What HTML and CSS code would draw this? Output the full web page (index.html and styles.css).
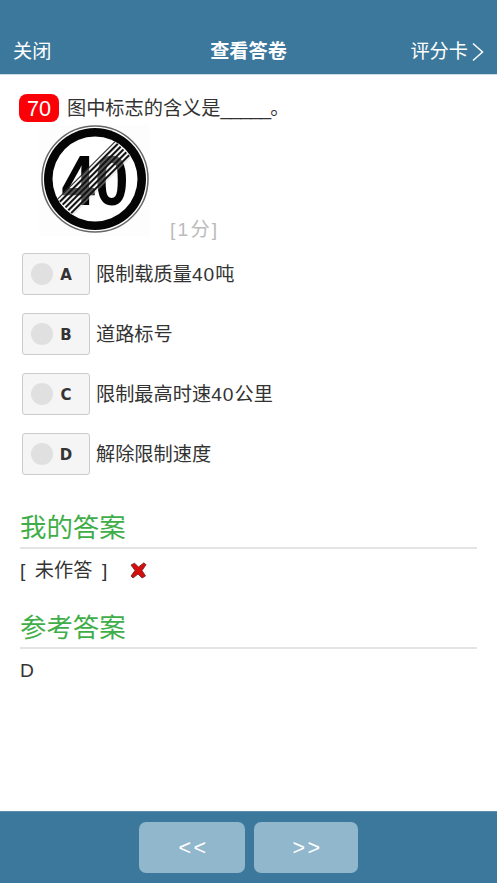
FILE: index.html
```
<!DOCTYPE html>
<html lang="zh-CN">
<head>
<meta charset="utf-8">
<title>查看答卷</title>
<link rel="stylesheet" href="styles.css">
</head>
<body>
<div class="app">
  <header class="topbar">
    <span class="top-left">关闭</span>
    <span class="top-title">查看答卷</span>
    <span class="top-right">评分卡<svg class="chev" width="12" height="20" viewBox="0 0 12 20"><path d="M1 1.5 L10.5 10 L1 18.5" fill="none" stroke="#fff" stroke-width="1.5"/></svg></span>
  </header>
  <main class="content">
    <div class="question"><span class="badge">70</span><span class="qtext">图中标志的含义是<span class="blank">_____</span>。</span></div>
    <div class="figure">
      <svg class="sign" width="111" height="111" viewBox="0 0 111 111">
        <defs>
          <pattern id="hatch" width="4" height="4" patternUnits="userSpaceOnUse" patternTransform="rotate(-45)">
            <rect width="4" height="2.1" fill="#111"/>
          </pattern>
          <clipPath id="inner"><circle cx="56" cy="54" r="42.5"/></clipPath>
        </defs>
        <rect width="111" height="111" fill="#fdfdfd"/>
        <circle cx="56" cy="54" r="53" fill="#fff" stroke="#666" stroke-width="1.5"/>
        <circle cx="56" cy="54" r="51" fill="#050505"/>
        <circle cx="56" cy="54" r="42.5" fill="#fff"/>
        <text class="sign-num" x="56" y="80" text-anchor="middle" textLength="67" lengthAdjust="spacingAndGlyphs">40</text>
        <g clip-path="url(#inner)">
          <polygon points="18,74 76,16 92,32 34,90" fill="#fff" opacity="0.35"/>
          <polygon points="18,74 76,16 92,32 34,90" fill="url(#hatch)"/>
        </g>
      </svg>
      <span class="score">[1分]</span>
    </div>
    <ul class="options">
      <li class="option"><span class="opt-btn"><i class="dot"></i><b class="letter">A</b></span><span class="opt-text">限制载质量<span class="num">40</span>吨</span></li>
      <li class="option"><span class="opt-btn"><i class="dot"></i><b class="letter">B</b></span><span class="opt-text">道路标号</span></li>
      <li class="option"><span class="opt-btn"><i class="dot"></i><b class="letter">C</b></span><span class="opt-text">限制最高时速<span class="num">40</span>公里</span></li>
      <li class="option"><span class="opt-btn"><i class="dot"></i><b class="letter">D</b></span><span class="opt-text">解除限制速度</span></li>
    </ul>
    <h2 class="sec-title first">我的答案</h2>
    <div class="answer mine"><span>[</span><span>未作答</span><span>]</span><svg class="cross" width="17" height="17" viewBox="0 0 17 17"><path d="M1 3 L4.5 1.2 L8.5 5 L14 0.8 L16 2.8 L12 8.5 L15.5 14 L12 16 L8 12 L3 16 L1 14 L5 8.5 Z" fill="#d40d0d" stroke="#6d2020" stroke-width="0.8"/></svg></div>
    <h2 class="sec-title second">参考答案</h2>
    <div class="answer ref">D</div>
  </main>
  <footer class="bottombar">
    <span class="nav-btn prev">&lt;&lt;</span>
    <span class="nav-btn next">&gt;&gt;</span>
  </footer>
</div>
</body>
</html>
```
FILE: styles.css
```
* { box-sizing: border-box; }
html, body { margin: 0; padding: 0; height: 100%; }
body { font-family: "Liberation Sans", "Noto Sans CJK SC", sans-serif; color: #333; background: #fff; overflow: hidden; }
.app { width: 497px; height: 883px; display: flex; flex-direction: column; }

.topbar { height: 75px; flex: none; background: #3c789b; border-bottom: 1px solid #c9dce8; color: #fff; padding: 29px 13px 0 13px; display: flex; align-items: center; justify-content: space-between; font-size: 19.2px; line-height: 30px; position: relative; }
.top-title { font-weight: 700; position: absolute; left: 0; right: 0; top: 37px; text-align: center; }
.top-right { display: flex; align-items: center; gap: 4px; }
.chev { display: block; }

.content { flex: 1; padding: 19px 20px 0 19px; }
.question { display: flex; align-items: center; height: 28px; }
.badge { width: 40px; height: 28px; background: #fb0007; border-radius: 8px; color: #fff; font-size: 21.6px; line-height: 29px; text-align: center; }
.qtext { margin-left: 8px; font-size: 19.2px; line-height: 28px; color: #333; position: relative; top: 1px; }
.blank { letter-spacing: -0.7px; }

.figure { display: flex; align-items: flex-end; padding-left: 20px; margin-top: 3px; height: 111px; }
.sign { display: block; flex: none; }
.sign-num { font-family: "Liberation Sans", sans-serif; font-size: 70px; font-weight: 700; fill: #050505; }
.score { margin-left: 20px; font-size: 19.2px; line-height: 26px; color: #bbb; letter-spacing: 2.2px; position: relative; top: 7px; }

.options { list-style: none; margin: 17px 0 0 3px; padding: 0; display: flex; flex-direction: column; gap: 18px; }
.option { display: flex; align-items: center; height: 42px; }
.opt-btn { width: 68px; height: 42px; background: #f5f5f5; border: 1px solid #ccc; border-radius: 3px; display: flex; align-items: center; padding-left: 8px; }
.dot { width: 22px; height: 22px; border-radius: 50%; background: #e0e0e0; flex: none; }
.letter { font-family: "DejaVu Sans", sans-serif; font-size: 15px; font-weight: 700; color: #333; width: 28px; text-align: center; margin-left: -1px; position: relative; top: 1px; }
.opt-text { margin-left: 6px; font-size: 19.2px; color: #333; position: relative; top: -1px; }
.num { letter-spacing: 1px; }

.sec-title { margin: 0; height: 40px; font-size: 26.4px; font-weight: 400; line-height: 39px; color: #3fae49; border-bottom: 2px solid #e4e4e4; margin-left: 1px; }
.sec-title.first { margin-top: 34px; }
.sec-title.second { margin-top: 21px; }
.answer { display: flex; align-items: center; gap: 9.5px; font-size: 19.2px; line-height: 28px; height: 39px; padding-top: 4px; margin-left: 1px; color: #333; }
.cross { margin-left: 13px; }

.bottombar { height: 72px; flex: none; background: #3c789b; border-top: 1px solid #5d8fad; display: flex; justify-content: center; align-items: flex-start; gap: 9px; padding-top: 10px; }
.nav-btn { height: 51px; background: #90b7cc; border-radius: 7px; color: #fff; font-size: 21.6px; font-weight: 400; letter-spacing: 2.5px; line-height: 51px; text-align: center; padding-left: 3px; }
.prev { width: 106px; }
.next { width: 104px; }
```
